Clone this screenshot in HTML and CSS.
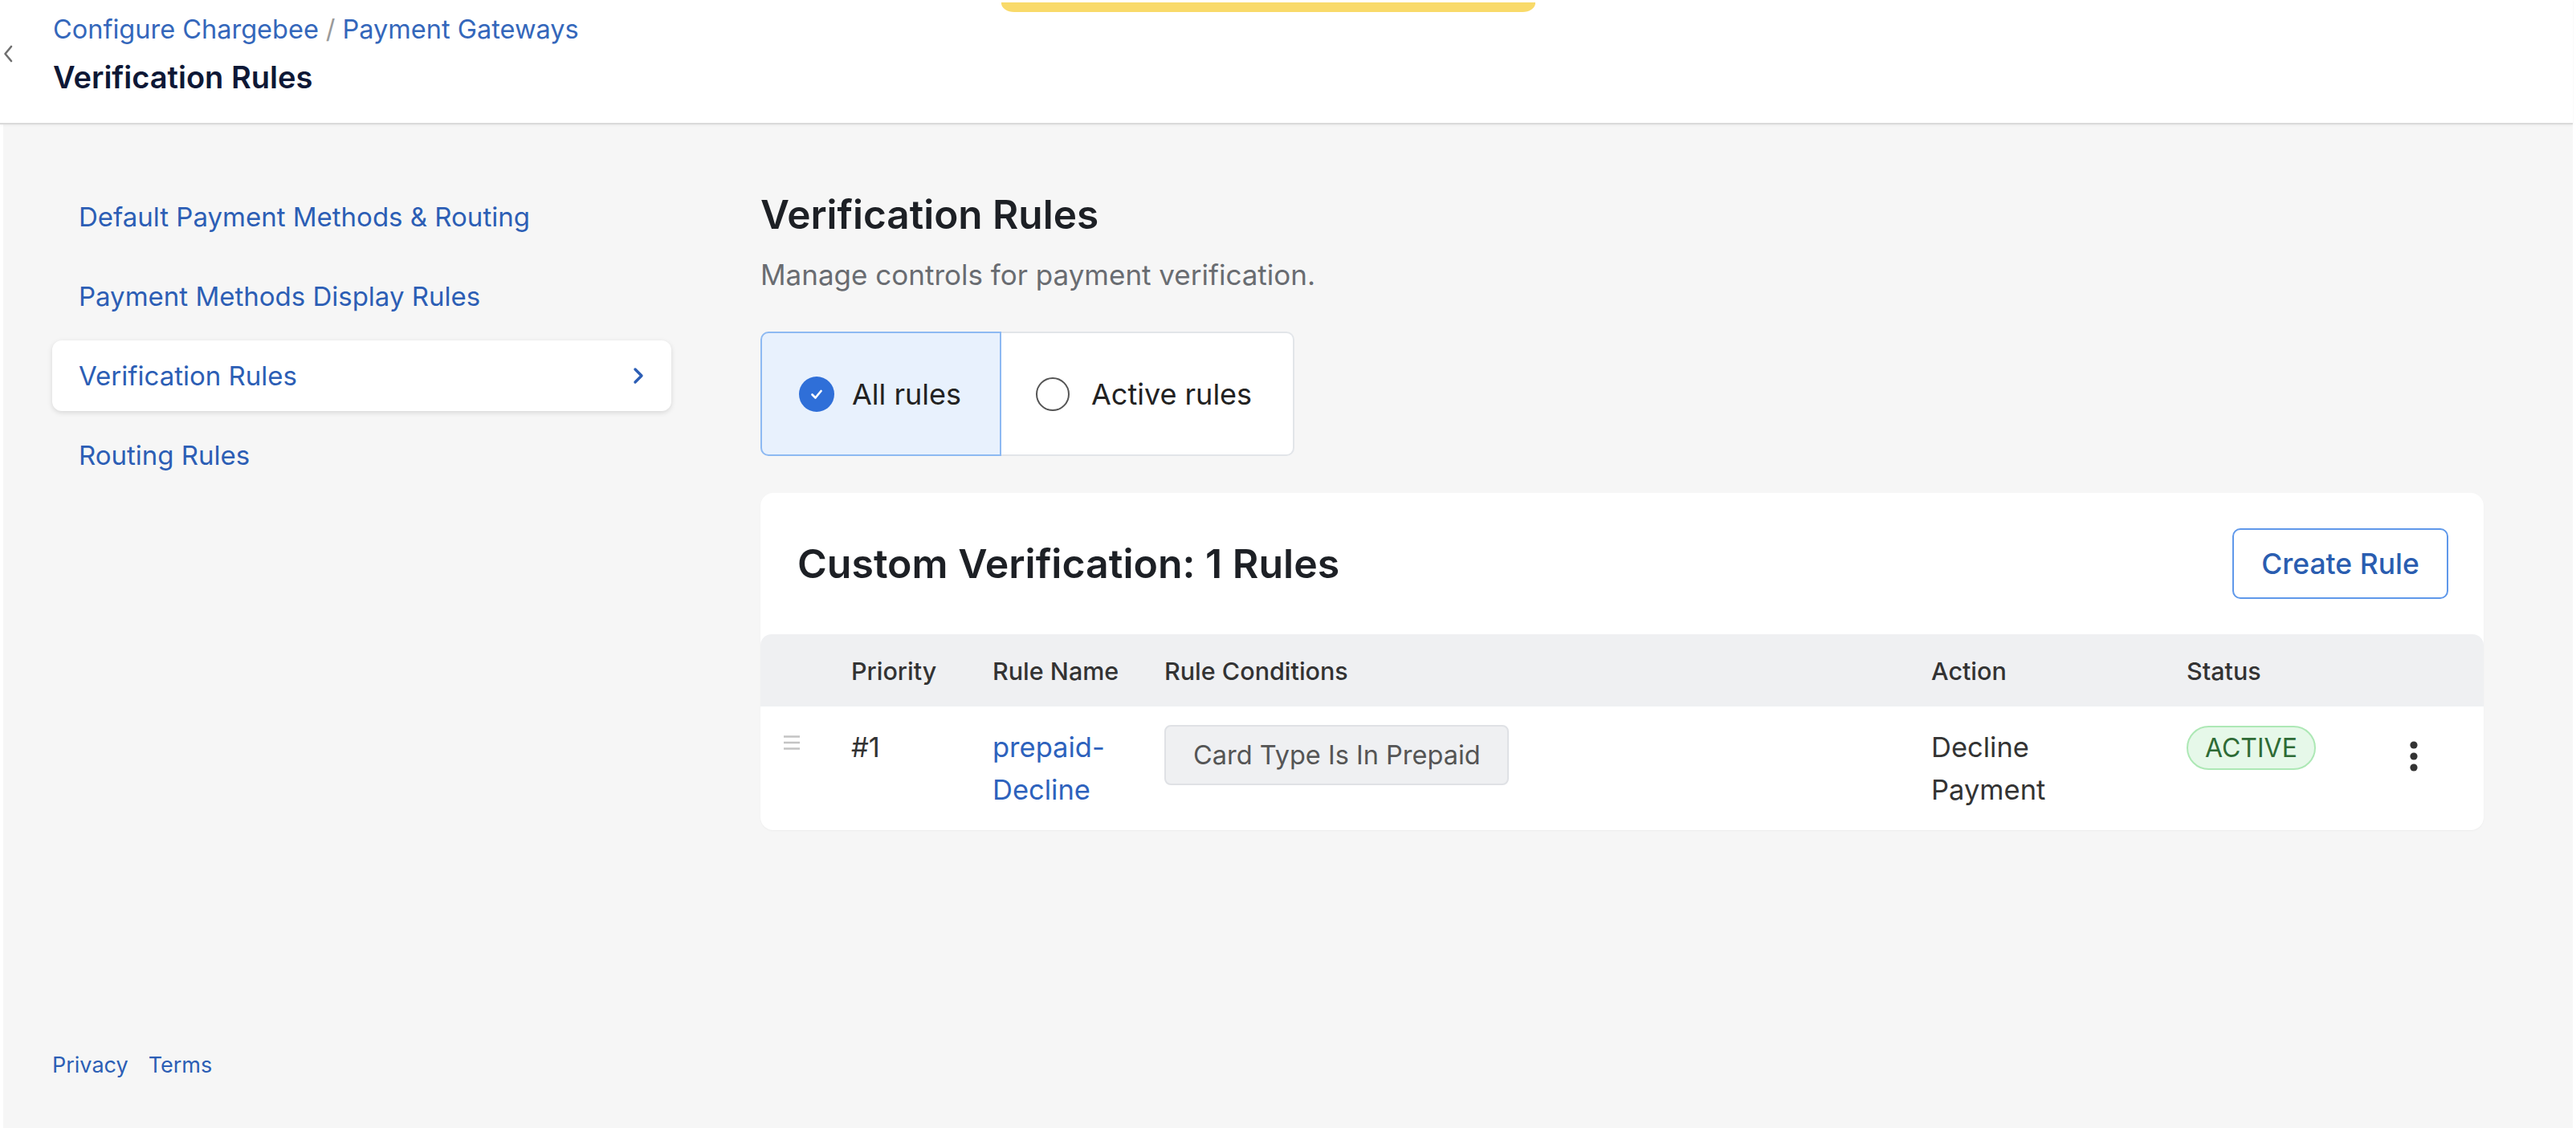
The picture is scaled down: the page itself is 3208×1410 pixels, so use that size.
FILE: index.html
```html
<!DOCTYPE html>
<html lang="en">
<head>
  <meta charset="UTF-8" />
  <meta name="viewport" content="width=device-width, initial-scale=1.0"/>
  <title>Verification Rules</title>
  <link rel="stylesheet" href="styles.css">
</head>
<body>

<div class="app">

  <!-- Top bar -->
  <header class="topbar">
    <div class="notice-strip"></div>
    <a class="back-link" href="#">
      <svg width="14" height="24" viewBox="0 0 14 24"><path d="M11 3 L3.5 12 L11 21" fill="none" stroke="#6f6f6f" stroke-width="2.6" stroke-linecap="round" stroke-linejoin="round"/></svg>
    </a>
    <div class="topbar-titles">
      <nav class="crumbs">
        <a href="#">Configure Chargebee</a>
        <span class="crumb-sep">/</span>
        <a href="#">Payment Gateways</a>
      </nav>
      <div class="topbar-title">Verification Rules</div>
    </div>
  </header>

  <div class="layout">

    <!-- Settings navigation -->
    <aside class="sidenav">
      <ul class="sidenav-list">
        <li><a href="#">Default Payment Methods &amp; Routing</a></li>
        <li><a href="#">Payment Methods Display Rules</a></li>
        <li class="active">
          <a href="#">Verification Rules
            <svg width="18" height="24" viewBox="0 0 18 24"><path d="M5 4 L13 12 L5 20" fill="none" stroke="#2c5eb5" stroke-width="3.4" stroke-linecap="round" stroke-linejoin="round"/></svg>
          </a>
        </li>
        <li><a href="#">Routing Rules</a></li>
      </ul>
      <div class="legal">
        <a href="#">Privacy</a>
        <a href="#">Terms</a>
      </div>
    </aside>

    <!-- Rules -->
    <main class="content">
      <h2 class="content-title">Verification Rules</h2>
      <p class="content-lead">Manage controls for payment verification.</p>

      <div class="segmented">
        <label class="seg seg-on">
          <span class="seg-check">
            <svg width="44" height="44" viewBox="0 0 44 44"><circle cx="22" cy="22" r="22" fill="#2f6fd8"/><path d="M16.5 22.5 L20.5 26.5 L27.5 18" fill="none" stroke="#fff" stroke-width="2.6" stroke-linecap="round" stroke-linejoin="round"/></svg>
          </span>
          All rules
        </label>
        <label class="seg">
          <span class="seg-radio"></span>
          Active rules
        </label>
      </div>

      <section class="card">
        <div class="card-head">
          <h3 class="card-title">Custom Verification: 1 Rules</h3>
          <button class="btn-outline">Create Rule</button>
        </div>

        <table class="rules">
          <colgroup>
            <col style="width:113px">
            <col style="width:176px">
            <col style="width:214px">
            <col style="width:955px">
            <col style="width:318px">
            <col style="width:268px">
            <col style="width:102px">
          </colgroup>
          <thead>
            <tr>
              <th></th>
              <th>Priority</th>
              <th>Rule Name</th>
              <th>Rule Conditions</th>
              <th>Action</th>
              <th>Status</th>
              <th></th>
            </tr>
          </thead>
          <tbody>
            <tr>
              <td class="cell-handle">
                <svg width="22" height="20" viewBox="0 0 22 20"><path d="M1 2.5 H21 M1 10 H21 M1 17.5 H21" stroke="#c4c4c4" stroke-width="2.6"/></svg>
              </td>
              <td>#1</td>
              <td><a class="rule-link" href="#">prepaid-Decline</a></td>
              <td><span class="chip">Card Type Is In Prepaid</span></td>
              <td><span class="wrap-narrow">Decline Payment</span></td>
              <td><span class="pill">ACTIVE</span></td>
              <td class="cell-menu">
                <svg width="12" height="40" viewBox="0 0 12 40"><circle cx="6" cy="6" r="4.6" fill="#333"/><circle cx="6" cy="20" r="4.6" fill="#333"/><circle cx="6" cy="34" r="4.6" fill="#333"/></svg>
              </td>
            </tr>
          </tbody>
        </table>
      </section>
    </main>
  </div>
</div>

</body>
</html>
```

FILE: styles.css
```css
* {
  margin: 0;
  padding: 0;
  box-sizing: border-box;
}

body {
  width: 3208px;
  height: 1410px;
  background: #fff;
  font-family: Inter, "Liberation Sans", sans-serif;
  color: #333;
  overflow: hidden;
}

a {
  color: #2c5eb5;
  text-decoration: none;
}

.app {
  width: 3204px;
}

/* top bar */
.topbar {
  position: relative;
  height: 155px;
  background: #fff;
  border-bottom: 2px solid #dadada;
  box-shadow: 0 1px 3px rgba(0,0,0,0.06);
  padding: 17px 0 0 66px;
}

.notice-strip {
  position: absolute;
  top: 3px;
  left: 1247px;
  width: 665px;
  height: 12px;
  background: #f9da6a;
  border-radius: 0 0 16px 16px / 0 0 11px 11px;
}

.back-link {
  position: absolute;
  left: 3px;
  top: 55px;
  display: block;
}

.crumbs {
  display: flex;
  gap: 9px;
  font-size: 32.5px;
  line-height: 40px;
}

.crumbs a {
  color: #3467bb;
}

.crumb-sep {
  color: #9a9a9a;
}

.topbar-title {
  margin-top: 17px;
  font-size: 38px;
  line-height: 44px;
  font-weight: 600;
  color: #0e1836;
}

/* page body */
.layout {
  display: flex;
  width: 3200px;
  height: 1250px;
  margin-left: 4px;
  background: #f6f6f6;
}

.sidenav {
  width: 943px;
  flex-shrink: 0;
  padding: 71px 0 60px 61px;
  display: flex;
  flex-direction: column;
  justify-content: space-between;
}

.sidenav-list {
  list-style: none;
  width: 771px;
  display: flex;
  flex-direction: column;
  gap: 11px;
}

.sidenav-list a {
  display: flex;
  align-items: center;
  justify-content: space-between;
  height: 88px;
  padding: 0 32px 0 33px;
  border-radius: 12px;
  font-size: 33px;
}

.sidenav-list .active a {
  background: #fff;
  box-shadow: 0 2px 6px rgba(0,0,0,0.13);
}

.legal {
  display: flex;
  gap: 25px;
  font-size: 27px;
  line-height: 36px;
}

.content {
  flex: 1;
  padding: 84px 111px 0 0;
}

.content-title {
  font-size: 49.5px;
  line-height: 56px;
  font-weight: 600;
  color: #1d2025;
}

.content-lead {
  margin-top: 27px;
  font-size: 35px;
  line-height: 40px;
  color: #696c71;
}

/* all / active switch */
.segmented {
  display: flex;
  margin-top: 51px;
  height: 155px;
}

.seg {
  display: flex;
  align-items: center;
  gap: 22px;
  height: 100%;
  font-size: 36px;
  color: #222;
  background: #fff;
  border: 2px solid #e2e5e9;
  border-left: none;
  border-radius: 0 10px 10px 0;
  width: 365px;
  padding-left: 43px;
}

.seg-on {
  width: 300px;
  padding-left: 46px;
  background: #e8f1fd;
  border: 2px solid #8db9f2;
  border-radius: 10px 0 0 10px;
}

.seg-check svg {
  display: block;
}

.seg-radio {
  width: 42px;
  height: 42px;
  border: 2.5px solid #555;
  border-radius: 50%;
  margin-right: 5px;
}

/* rules card */
.card {
  margin-top: 46px;
  background: #fff;
  border-radius: 16px;
  box-shadow: 0 1px 2px rgba(0,0,0,0.04);
  overflow: hidden;
}

.card-head {
  height: 176px;
  display: flex;
  align-items: center;
  justify-content: space-between;
  padding: 0 44px 0 46px;
}

.card-title {
  font-size: 50px;
  line-height: 56px;
  font-weight: 600;
  color: #1d2025;
}

.btn-outline {
  width: 269px;
  height: 88px;
  background: #fff;
  border: 2px solid #5f98ea;
  border-radius: 10px;
  color: #2a5db0;
  font-family: inherit;
  font-size: 35.5px;
  font-weight: 500;
}

.rules {
  width: 100%;
  border-collapse: collapse;
  table-layout: fixed;
}

.rules th {
  height: 90px;
  background: #eff0f2;
  text-align: left;
  font-size: 30.5px;
  font-weight: 500;
  color: #333;
}

.rules th:first-child {
  border-top-left-radius: 14px;
}

.rules th:last-child {
  border-top-right-radius: 14px;
}

.rules td {
  vertical-align: top;
  padding: 24px 0;
  font-size: 34.5px;
  line-height: 53px;
  color: #333;
}

.rules td.cell-handle {
  padding-left: 28px;
}

.cell-handle svg {
  display: block;
  margin-top: 11px;
}

.rule-link {
  display: block;
  max-width: 160px;
  color: #2d62bd;
}

.wrap-narrow {
  display: block;
  max-width: 200px;
}

.chip {
  display: inline-block;
  height: 75px;
  margin-top: -1px;
  padding: 0 33px 0 34px;
  line-height: 71px;
  font-size: 32.5px;
  background: #eff0f2;
  border: 2px solid #dfe1e5;
  border-radius: 8px;
  color: #555;
}

.pill {
  display: inline-block;
  height: 55px;
  margin-top: -2px;
  padding: 0 21px;
  line-height: 51px;
  font-size: 32px;
  background: #e6f8e9;
  border: 2px solid #ade8b5;
  border-radius: 28px;
  color: #2e6b35;
}

.rules td.cell-menu {
  padding-left: 9px;
}

.cell-menu svg {
  display: block;
  margin-top: 18px;
}
```
